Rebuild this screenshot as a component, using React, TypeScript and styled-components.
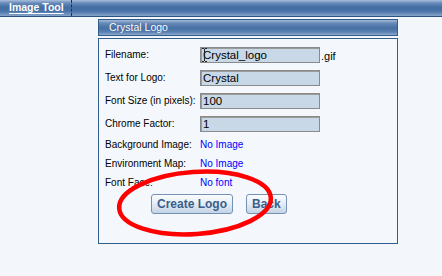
import React from 'react';
import styled, { createGlobalStyle } from 'styled-components';

const GlobalStyle = createGlobalStyle`
  html, body {
    margin: 0;
    padding: 0;
    background: #f3f7fb;
  }
  body {
    font-family: "Liberation Sans", Arial, sans-serif;
    width: 442px;
    height: 276px;
    overflow: hidden;
    position: relative;
  }
`;

interface Field {
  label: string;
  value?: string;
  link?: string;
  suffix?: string;
  cursor?: boolean;
}

const fields: Field[] = [
  { label: 'Filename:', value: 'Crystal_logo', suffix: '.gif', cursor: true },
  { label: 'Text for Logo:', value: 'Crystal' },
  { label: 'Font Size (in pixels):', value: '100' },
  { label: 'Chrome Factor:', value: '1' },
  { label: 'Background Image:', link: 'No Image' },
  { label: 'Environment Map:', link: 'No Image' },
  { label: 'Font Face:', link: 'No font' },
];

const App: React.FC = () => {
  return (
    <>
      <GlobalStyle />
      <TopBar>
        <Tab>Image Tool</Tab>
      </TopBar>

      <Panel>
        <TitleBar>Crystal Logo</TitleBar>
        <Body>
          <Form>
            {fields.map((f) => (
              <Row key={f.label} tall={!!f.value}>
                <Label>{f.label}</Label>
                {f.value !== undefined ? (
                  <InputWrap>
                    <Input>
                      {f.value}
                      {f.cursor && (
                        <Cursor width="5" height="14" viewBox="0 0 5 14">
                          <path d="M0 0.5h2M3 0.5h2M2.5 1v12M0 13.5h2M3 13.5h2" stroke="#222" strokeWidth="1" fill="none" />
                        </Cursor>
                      )}
                    </Input>
                    {f.suffix && <Suffix>{f.suffix}</Suffix>}
                  </InputWrap>
                ) : (
                  <Link>{f.link}</Link>
                )}
              </Row>
            ))}
          </Form>
          <Buttons>
            <Button>Create Logo</Button>
            <Button>Back</Button>
          </Buttons>
        </Body>
      </Panel>

      <Annotation width="442" height="276" viewBox="0 0 442 276">
        <ellipse
          cx="195"
          cy="203"
          rx="76"
          ry="31"
          transform="rotate(-4 195 203)"
          fill="none"
          stroke="#f00"
          strokeWidth="4.5"
        />
      </Annotation>
    </>
  );
};

const TopBar = styled.div`
  height: 16px;
  border-bottom: 1px solid #2c5282;
  background: linear-gradient(#a9bedb 0%, #6689b8 20%, #426da3 45%, #4a74a8 70%, #86a4ca 100%);
  display: flex;
`;

const Tab = styled.div`
  width: 62px;
  padding-left: 9px;
  border-right: 1px dashed #3a2838;
  color: #fff;
  font-weight: bold;
  font-size: 10.5px;
  line-height: 15px;
  text-decoration: underline;
  text-underline-offset: 2px;
`;

const Panel = styled.div`
  margin: 2px 0 0 98px;
  width: 300px;
`;

const TitleBar = styled.div`
  box-sizing: border-box;
  height: 17px;
  border: 1px solid #2f5d8c;
  background: linear-gradient(#a3b9d7 0%, #5f84b4 25%, #4770a4 55%, #5880b2 80%, #8eaacd 100%);
  color: #fff;
  font-size: 10.5px;
  line-height: 15px;
  padding-left: 10px;
  text-shadow: 0 0 1px rgba(30, 60, 100, 0.6);
`;

const Body = styled.div`
  box-sizing: border-box;
  margin-top: 2px;
  height: 206px;
  border: 1px solid #2f5d8c;
  background: #f4f8fc;
  padding: 4px 0 0 6px;
`;

const Form = styled.div`
  display: flex;
  flex-direction: column;
`;

const Row = styled.div<{ tall: boolean }>`
  display: grid;
  grid-template-columns: 95px auto;
  align-items: center;
  height: ${(p) => (p.tall ? '23px' : '19px')};
`;

const Label = styled.div`
  font-size: 10px;
  color: #000;
  white-space: nowrap;
`;

const InputWrap = styled.div`
  display: flex;
  align-items: flex-end;
`;

const Input = styled.div`
  position: relative;
  box-sizing: border-box;
  width: 120px;
  height: 16px;
  border: 1px solid #8a8a8a;
  box-shadow: inset 1px 1px 0 #9a9a9a;
  background: #c8d8e6;
  font-size: 11.5px;
  line-height: 14px;
  padding-left: 2px;
  color: #000;
`;

const Cursor = styled.svg`
  position: absolute;
  left: 1px;
  top: 0;
`;

const Suffix = styled.span`
  font-size: 11px;
  margin-left: 1px;
  line-height: 14px;
`;

const Link = styled.span`
  font-size: 10px;
  color: #0000ff;
`;

const Buttons = styled.div`
  display: flex;
  gap: 13px;
  padding: 2px 0 0 46px;
`;

const Button = styled.button`
  height: 20px;
  padding: 0 5px;
  border: 1px solid #7592b6;
  border-radius: 3px;
  background: linear-gradient(#fbfdff 0%, #e4ecf4 50%, #c3d4e6 100%);
  color: #3a5d8c;
  font-family: "Liberation Sans", Arial, sans-serif;
  font-weight: bold;
  font-size: 12px;
`;

const Annotation = styled.svg`
  position: absolute;
  left: 0;
  top: 0;
  pointer-events: none;
`;

export default App;
